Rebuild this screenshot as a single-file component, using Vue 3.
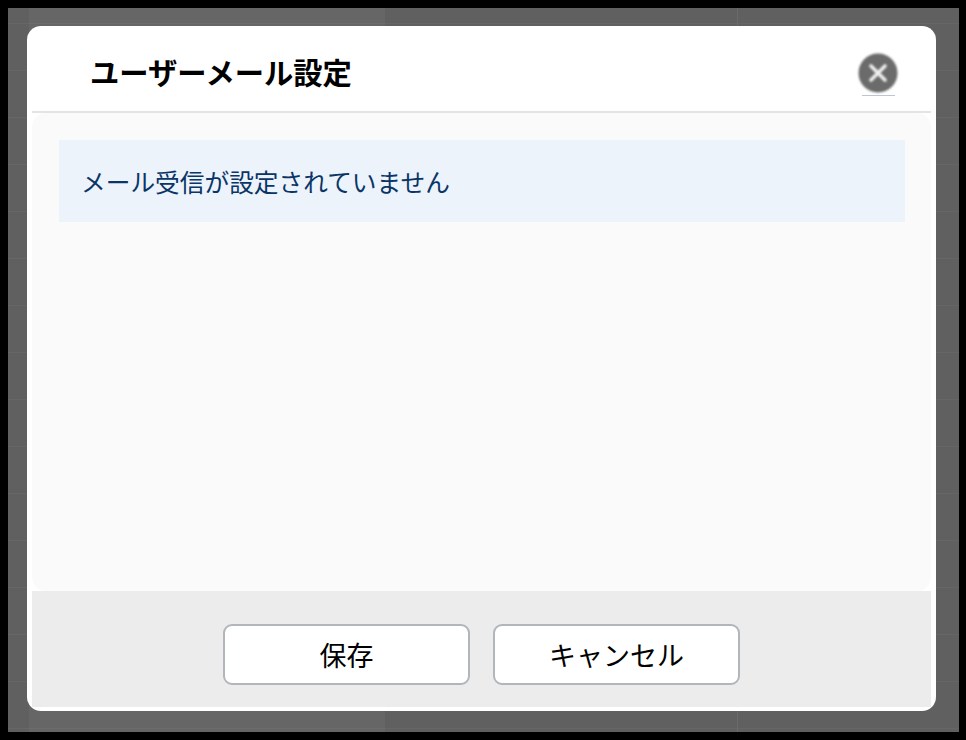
<script setup>
const title = 'ユーザーメール設定'
const message = 'メール受信が設定されていません'
</script>

<template>
  <div class="frame">
    <div class="overlay">
      <div class="modal">
        <header class="modal-head">
          <h1 class="modal-title">{{ title }}</h1>
          <button class="close" type="button" aria-label="閉じる">
            <svg class="close-icon" width="40" height="40" viewBox="0 0 40 40">
              <circle cx="20" cy="20" r="19.5" fill="#6b6b6b" />
              <path d="M13 13 27 27M27 13 13 27" stroke="#f0f0f0" stroke-width="3.6" stroke-linecap="round" />
            </svg>
            <span class="close-line"></span>
          </button>
        </header>
        <main class="modal-body">
          <p class="notice">{{ message }}</p>
        </main>
        <footer class="modal-foot">
          <button class="btn" type="button">保存</button>
          <button class="btn" type="button">キャンセル</button>
        </footer>
      </div>
    </div>
  </div>
</template>

<style>
html, body {
  margin: 0;
  background: #000;
}
</style>

<style scoped>
.frame {
  box-sizing: border-box;
  width: 966px;
  height: 740px;
  padding: 8px 7px 8px 8px;
  background: #000;
  font-family: "Noto Sans CJK JP", "Liberation Sans", sans-serif;
}

.overlay {
  box-sizing: border-box;
  height: 100%;
  padding: 18px 23px 21px 19px;
  background-color: #606060;
  background-image:
    linear-gradient(#6a6a6a, #6a6a6a),
    linear-gradient(rgba(255, 255, 255, 0.04) 1px, transparent 1px),
    linear-gradient(90deg, #606060 21px, #666 21px, #666 377px, #606060 377px);
  background-size: 1px 100%, 100% 47px, 100% 100%;
  background-position: 729px 0, 0 15px, 0 0;
  background-repeat: no-repeat, repeat, no-repeat;
}

.modal {
  box-sizing: border-box;
  display: flex;
  flex-direction: column;
  height: 100%;
  padding: 0 5px 4px;
  background: #fff;
  border-radius: 14px;
}

.modal-head {
  box-sizing: border-box;
  display: flex;
  align-items: flex-start;
  justify-content: space-between;
  height: 87px;
  padding: 25px 33px 0 58px;
  border-bottom: 2px solid #e4e4e4;
}

.modal-title {
  margin: 0;
  color: #000;
  font-size: 29.3px;
  font-weight: 700;
  line-height: 40px;
}

.close {
  display: flex;
  flex-direction: column;
  align-items: center;
  gap: 2px;
  width: 40px;
  margin-top: 2px;
  padding: 0;
  border: 0;
  background: none;
}

.close-icon {
  display: block;
  filter: blur(0.8px);
}

.close-line {
  width: 33px;
  height: 1px;
  background: #b8c6d8;
}

.modal-body {
  flex: 1;
  padding: 27px 26px 0 27px;
  background: #fafafa;
  border-radius: 14px;
}

.notice {
  margin: 0;
  padding: 0 22px;
  background: #ecf3fb;
  color: #0a3566;
  font-size: 24.7px;
  line-height: 82px;
}

.modal-foot {
  box-sizing: border-box;
  display: flex;
  justify-content: center;
  gap: 23px;
  height: 116px;
  padding-top: 33px;
  background: #ececec;
}

.btn {
  box-sizing: border-box;
  width: 247px;
  height: 61px;
  padding: 0;
  border: 2px solid #b1b6ba;
  border-radius: 9px;
  background: #fff;
  color: #000;
  font-family: inherit;
  font-size: 27px;
}
</style>
